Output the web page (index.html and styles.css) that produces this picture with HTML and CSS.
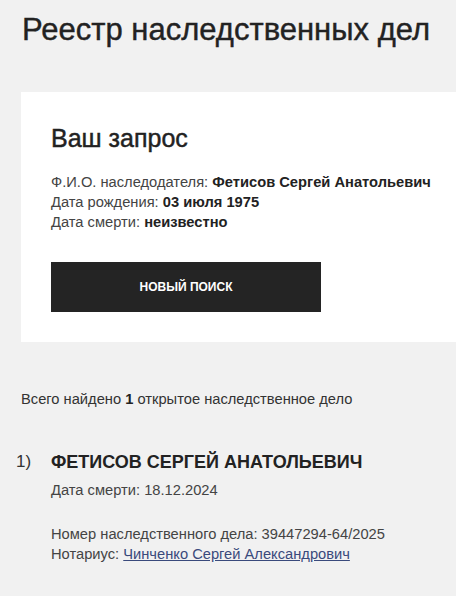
FILE: index.html
```html
<!DOCTYPE html>
<html lang="ru">
<head>
<meta charset="utf-8">
<link rel="stylesheet" href="styles.css">
</head>
<body>
<main class="page">
  <h1 class="title">Реестр наследственных дел</h1>
  <section class="card">
    <h2 class="card-title">Ваш запрос</h2>
    <div class="info">
      <div>Ф.И.О. наследодателя: <b>Фетисов Сергей Анатольевич</b></div>
      <div>Дата рождения: <b>03 июля 1975</b></div>
      <div>Дата смерти: <b>неизвестно</b></div>
    </div>
    <button class="btn">НОВЫЙ ПОИСК</button>
  </section>
  <p class="summary">Всего найдено <b>1</b> открытое наследственное дело</p>
  <ol class="results">
    <li class="result">
      <span class="num">1)</span>
      <div class="result-body">
        <div class="name">ФЕТИСОВ СЕРГЕЙ АНАТОЛЬЕВИЧ</div>
        <div class="line">Дата смерти: 18.12.2024</div>
        <div class="case">
          <div class="line">Номер наследственного дела: 39447294-64/2025</div>
          <div class="line">Нотариус: <a href="#" class="link">Чинченко Сергей Александрович</a></div>
        </div>
      </div>
    </li>
  </ol>
</main>
</body>
</html>
```
FILE: styles.css
```css
* { box-sizing: border-box; }
html, body { margin: 0; padding: 0; }
body {
  background: #f1f1f1;
  font-family: "Liberation Sans", Arial, sans-serif;
  color: #333;
  width: 456px;
  overflow: hidden;
}
.page { padding: 0 0 0 21px; }
.title {
  margin: 0;
  padding: 12px 0 0 1px;
  font-size: 31px;
  font-weight: 400;
  line-height: 36px;
  color: #222;
  -webkit-text-stroke: 0.4px #222;
  white-space: nowrap;
}
.card {
  margin: 44px 0 0 0;
  background: #fff;
  padding: 31px 30px 30px 30px;
  height: 250px;
}
.card-title {
  margin: 0;
  font-size: 25px;
  font-weight: 400;
  line-height: 30px;
  color: #222;
  -webkit-text-stroke: 0.45px #222;
}
.info {
  margin-top: 19px;
  font-size: 14.7px;
  line-height: 20px;
  color: #444;
  white-space: nowrap;
}
.info b { color: #222; }
.btn {
  display: flex;
  align-items: center;
  justify-content: center;
  margin-top: 30px;
  width: 270px;
  height: 50px;
  background: #242424;
  color: #fff;
  border: 0;
  font-family: "Liberation Sans", Arial, sans-serif;
  font-weight: 700;
  font-size: 12px;
  padding: 0;
}
.summary {
  margin: 47px 0 0 0;
  font-size: 14.7px;
  line-height: 20px;
  color: #333;
}
.summary b { color: #222; }
.results { list-style: none; margin: 0; padding: 0; }
.result {
  display: flex;
  margin-top: 41px;
  margin-left: -5px;
}
.num {
  width: 35px;
  font-size: 17px;
  line-height: 24px;
  color: #333;
}
.name {
  font-size: 18px;
  font-weight: 700;
  line-height: 24px;
  color: #222;
}
.line {
  font-size: 14.7px;
  line-height: 20px;
  color: #444;
}
.result-body > .line { margin-top: 6px; }
.case { margin-top: 24px; }
.link { color: #3a4a7c; text-decoration: underline; }
```
